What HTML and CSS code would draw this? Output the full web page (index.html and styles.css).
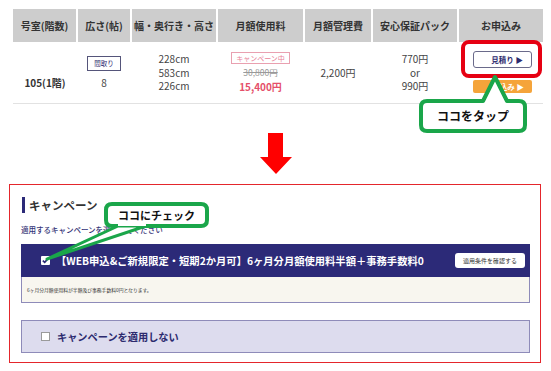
FILE: index.html
```html
<!DOCTYPE html>
<html lang="ja">
<head>
<meta charset="utf-8">
<title>キャンペーン</title>
<link rel="stylesheet" href="styles.css">
</head>
<body>
<div class="page">
  <section class="top">
    <table class="rooms">
      <colgroup>
        <col class="w1"><col class="w2"><col class="w3"><col class="w4"><col class="w5"><col class="w6"><col class="w7">
      </colgroup>
      <thead>
        <tr>
          <th>号室(階数)</th>
          <th>広さ(帖)</th>
          <th>幅・奥行き・高さ</th>
          <th>月額使用料</th>
          <th>月額管理費</th>
          <th>安心保証パック</th>
          <th>お申込み</th>
        </tr>
      </thead>
      <tbody>
        <tr>
          <td class="room-no">105(1階)</td>
          <td><span class="madori">間取り</span><br>8</td>
          <td>228cm<br>583cm<br>226cm</td>
          <td>
            <span class="badge">キャンペーン中</span><br>
            <span class="old-price">30,800円</span><br>
            <span class="new-price">15,400円</span>
          </td>
          <td>2,200円</td>
          <td>770円<br>or<br>990円</td>
          <td>
            <div class="actions">
              <span class="btn-quote">見積り ▶</span>
              <span class="btn-apply">申込み ▶</span>
            </div>
          </td>
        </tr>
      </tbody>
    </table>
  </section>

  <div class="arrow-row">
    <svg width="32" height="41" viewBox="0 0 32 41"><path d="M8 0H23V24H32L16 41L0 24H8Z" fill="#ff0000"/></svg>
  </div>

  <section class="campaign">
    <h2 class="camp-title">キャンペーン</h2>
    <p class="camp-lead">適用するキャンペーンを選択してください</p>
    <div class="camp-card">
      <div class="camp-head">
        <span class="chk chk-on"><svg width="9" height="9" viewBox="0 0 9 9"><path d="M1.8 4.6L3.7 6.4L7.3 2.4" fill="none" stroke="#2c2a78" stroke-width="1.6"/></svg></span>
        <span class="camp-name">【WEB申込&amp;ご新規限定・短期2か月可】6ヶ月分月額使用料半額＋事務手数料0</span>
        <span class="cond-btn">適用条件を確認する</span>
      </div>
      <div class="camp-desc">6ヶ月分月額使用料が半額及び事務手数料0円となります。</div>
    </div>
    <div class="no-camp"><span class="chk chk-off"></span><span>キャンペーンを適用しない</span></div>
  </section>

  <div class="hl-red"></div>
  <svg class="callouts" width="551" height="371" viewBox="0 0 551 371">
    <path d="M427 101H483L495 77L507 101H519Q525 101 525 107V125Q525 131 519 131H427Q421 131 421 125V107Q421 101 427 101Z" fill="#fff" stroke="#1aa64a" stroke-width="4" stroke-linejoin="round"/>
    <path d="M112 204H201Q207 204 207 210V220Q207 226 201 226H112Q106 226 106 220V210Q106 204 112 204Z" fill="#fff" stroke="#1aa64a" stroke-width="4"/>
    <path d="M118 226L47 259L146 226Z" fill="#fff" stroke="#1aa64a" stroke-width="3" stroke-linejoin="round"/>
    <rect x="118" y="220" width="28" height="6" fill="#fff"/>
  </svg>
  <span class="callout-text tap">ココをタップ</span>
  <span class="callout-text check">ココにチェック</span>
</div>
</body>
</html>
```

FILE: styles.css
```css
* { box-sizing: border-box; }
html, body { margin: 0; padding: 0; background: #fff; }
body {
  font-family: "Noto Sans CJK JP", "Noto Sans", sans-serif;
  color: #333;
}
.page {
  position: relative;
  width: 551px;
  height: 371px;
  overflow: hidden;
}

/* ---- table ---- */
.top { padding: 9px 0 0 13px; }
.rooms {
  width: 530px;
  table-layout: fixed;
  border-collapse: collapse;
}
.w1 { width: 64px; }
.w2 { width: 54px; }
.w3 { width: 86px; }
.w4 { width: 87px; }
.w5 { width: 68px; }
.w6 { width: 86px; }
.w7 { width: 85px; }
.rooms th {
  height: 33px;
  padding: 0;
  background: #cdcdcd;
  border-left: 2px solid #fff;
  font-size: 10px;
  font-weight: 700;
  color: #333;
  text-align: center;
}
.rooms th:first-child { border-left: 0; }
.rooms td {
  height: 61px;
  padding: 0;
  border-bottom: 1px solid #e2e2e2;
  text-align: center;
  vertical-align: middle;
  font-size: 10px;
  line-height: 13.5px;
  color: #444;
}
.rooms td.room-no {
  padding-top: 21px;
  font-weight: 700;
  color: #333;
}
.madori {
  display: inline-block;
  width: 34px;
  height: 15px;
  margin-bottom: 5px;
  border: 1px solid #55557a;
  font-size: 6.5px;
  line-height: 13px;
  color: #2c2a6e;
  vertical-align: top;
}
.badge {
  display: inline-block;
  height: 12px;
  padding: 0 4px;
  border: 1px solid #e9a0b0;
  font-size: 7px;
  line-height: 10px;
  color: #e8839a;
  vertical-align: top;
}
.old-price {
  font-size: 8.5px;
  color: #999;
  text-decoration: line-through;
}
.new-price {
  font-weight: 700;
  color: #e5506a;
}
.actions {
  display: flex;
  flex-direction: column;
  align-items: center;
  gap: 12px;
  padding-left: 4px;
}
.btn-quote, .btn-apply {
  display: flex;
  align-items: center;
  justify-content: flex-end;
  width: 59px;
  padding-right: 8px;
  font-size: 7.5px;
  font-weight: 700;
}
.btn-quote {
  height: 17px;
  border: 1px solid #6a6a8a;
  border-radius: 3px;
  background: #fff;
  color: #2c2a6e;
}
.btn-apply {
  height: 13px;
  border-radius: 2px;
  background: #f5a43a;
  color: #fff;
}

/* ---- arrow ---- */
.arrow-row {
  height: 80px;
  padding-top: 29px;
  display: flex;
  justify-content: center;
}
.arrow-row svg { display: block; }

/* ---- campaign ---- */
.campaign {
  margin: 0 10px 0 9px;
  border: 1px solid #e4262c;
  padding: 12px 10px 9px 11px;
}
.camp-title {
  margin: 0 0 0 1px;
  padding-left: 4px;
  border-left: 3px solid #2c2a78;
  font-size: 11.5px;
  line-height: 16px;
  font-weight: 700;
  color: #333;
}
.camp-lead {
  margin: 11px 0 0;
  font-size: 7.5px;
  line-height: 11px;
  font-weight: 500;
  color: #353578;
}
.camp-card { margin-top: 9px; }
.camp-head {
  height: 33px;
  display: flex;
  align-items: center;
  padding: 0 5px 0 20px;
  background: #2c2a78;
}
.chk {
  display: block;
  flex: none;
  width: 9px;
  height: 9px;
  background: #fff;
  border-radius: 1px;
}
.chk svg { display: block; }
.chk-off { border: 1px solid #9a9a9a; border-radius: 0; }
.camp-name {
  flex: 1;
  margin-left: 6px;
  white-space: nowrap;
  font-size: 10.3px;
  font-weight: 700;
  color: #fff;
}
.cond-btn {
  width: 70px;
  height: 15px;
  border-radius: 3px;
  background: #fff;
  font-size: 6px;
  line-height: 15px;
  text-align: center;
  color: #333;
}
.camp-desc {
  height: 26px;
  display: flex;
  align-items: center;
  padding-left: 5px;
  border: 1px solid #8e8bb9;
  border-top: 0;
  background: #f8f6ef;
  font-size: 4.8px;
  color: #333;
}
.no-camp {
  margin-top: 17px;
  height: 33px;
  display: flex;
  align-items: center;
  gap: 7px;
  padding-left: 19px;
  border: 1px solid #8e8bb9;
  background: #dddcee;
  font-size: 10.2px;
  font-weight: 700;
  color: #2c2a6e;
}

/* ---- overlays ---- */
.hl-red {
  position: absolute;
  left: 461px;
  top: 40px;
  width: 81px;
  height: 38px;
  border: 4px solid #e60012;
  border-radius: 8px;
}
.callouts {
  position: absolute;
  left: 0;
  top: 0;
  pointer-events: none;
}
.callout-text {
  position: absolute;
  text-align: center;
  font-weight: 700;
  color: #111;
  white-space: nowrap;
}
.tap {
  left: 421px;
  top: 101px;
  width: 104px;
  height: 30px;
  line-height: 30px;
  font-size: 12px;
}
.check {
  left: 106px;
  top: 204px;
  width: 101px;
  height: 22px;
  line-height: 22px;
  font-size: 11px;
}
```
